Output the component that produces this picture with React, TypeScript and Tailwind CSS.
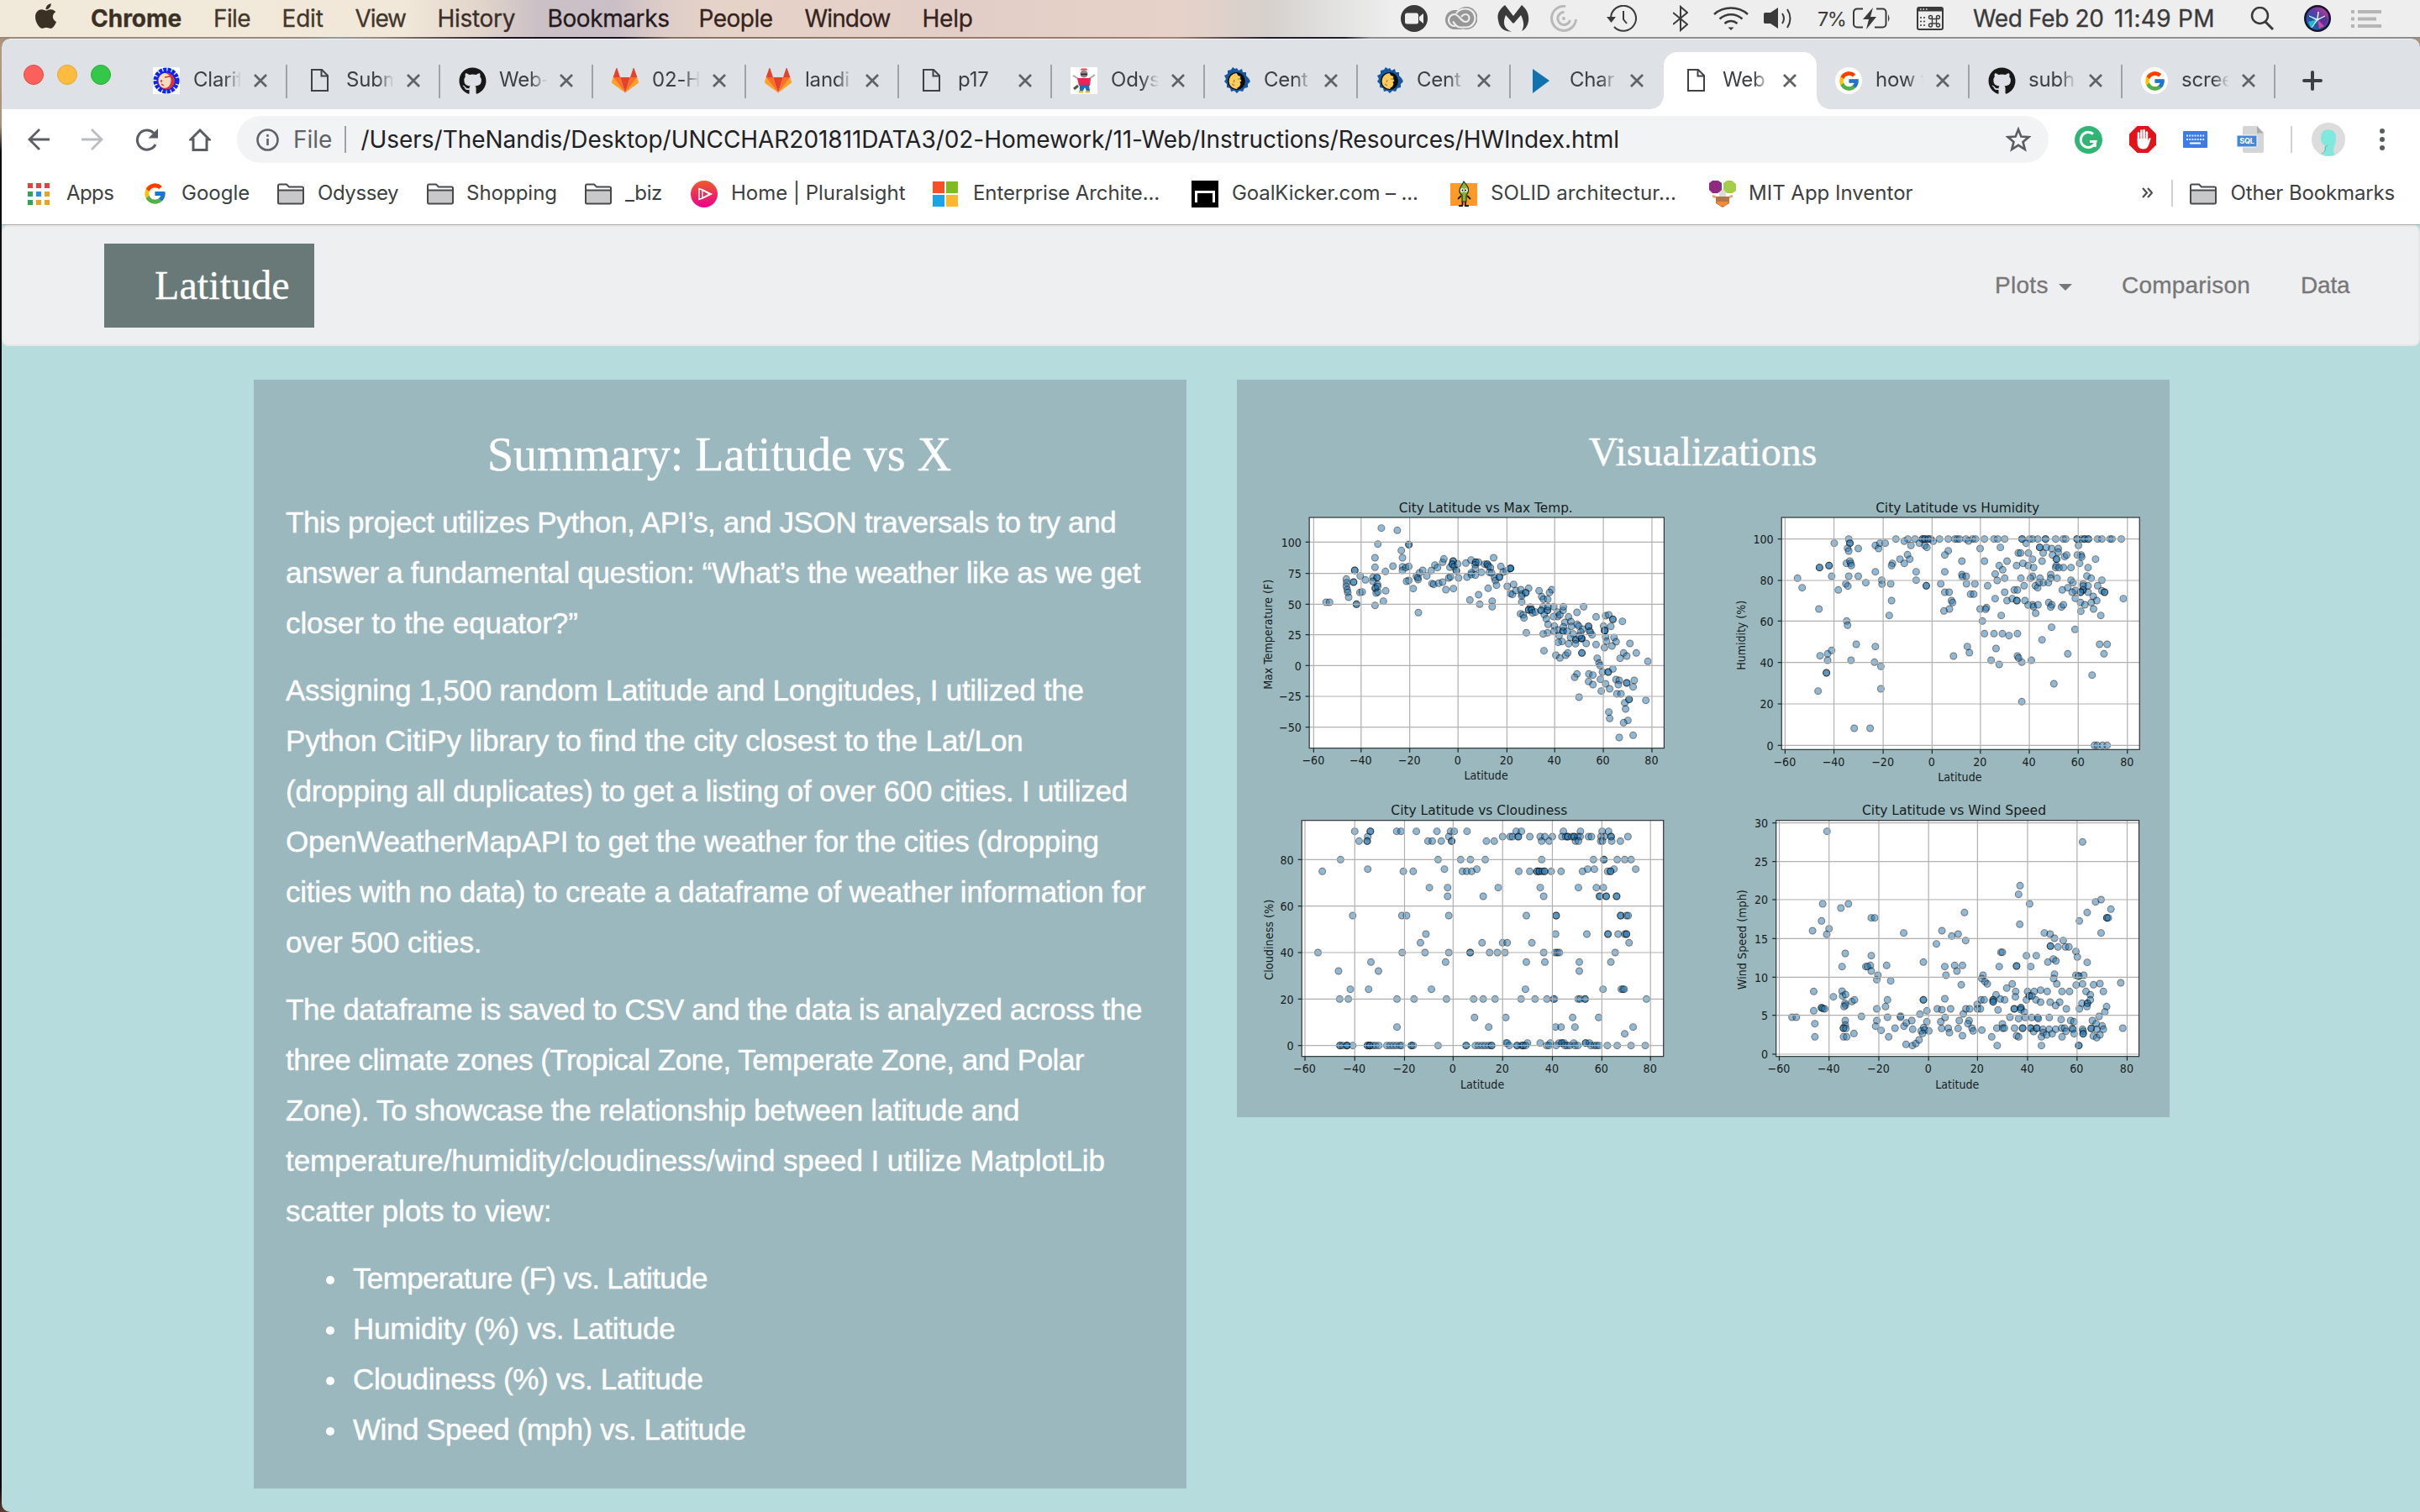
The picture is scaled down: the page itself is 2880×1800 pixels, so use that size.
import React from "react";
import { FaApple, FaGithub } from "react-icons/fa";
import { FcGoogle } from "react-icons/fc";

/* ---------- small icons ---------- */

const DocIcon = () => (
  <svg className="ml-[6px] h-[32px] w-[21px]" viewBox="0 0 21 32" fill="none" stroke="#3f4245" strokeWidth="2">
    <path d="M1 3h12l7 7v18H1z" />
    <path d="M12.500 3v7.500h7.500" />
  </svg>
);

const GitlabIcon = () => (
  <svg className="h-[32px] w-[32px]" viewBox="0 0 32 32">
    <path d="M16 30.500 22 12H10z" fill="#e24329" />
    <path d="M16 30.500 10 12H1.600z" fill="#fc6d26" />
    <path d="M1.600 12 0 17.500a1.300 1.300 0 0 0 .5 1.400L16 30.500z" fill="#fca326" />
    <path d="M1.600 12H10L6.500 1.500c-.2-.6-1-.6-1.200 0z" fill="#e24329" />
    <path d="M16 30.500 22 12h8.400z" fill="#fc6d26" />
    <path d="M30.400 12 32 17.500a1.300 1.300 0 0 1-.5 1.400L16 30.500z" fill="#fca326" />
    <path d="M30.400 12H22l3.500-10.500c.2-.6 1-.6 1.200 0z" fill="#e24329" />
  </svg>
);

const ClarityIcon = () => (
  <svg className="h-[32px] w-[32px]" viewBox="0 0 32 32">
    <rect width="32" height="32" fill="#fff" />
    <circle cx="16" cy="16" r="13" fill="none" stroke="#0b24fb" strokeWidth="5" strokeDasharray="4 1.200" />
    <circle cx="16" cy="16" r="11.500" fill="#0b24fb" />
    <circle cx="16" cy="16.500" r="10" fill="#d8343a" />
    <ellipse cx="14" cy="16" rx="7.500" ry="9" fill="#f7dcc0" />
    <path d="M14 12l6-1M10 20l3 2M10 15v3" stroke="#c23a2c" strokeWidth="1.500" />
  </svg>
);

const SunMoonIcon = () => (
  <svg className="h-[32px] w-[32px]" viewBox="0 0 32 32">
    <path
      d="M16 1l2 3 4-2 1 4 4 0 0 4 3 3 2 4-3 3 0 4-4 1-2 4-4-1-3 3-3-3-4 1-1-4-4-1 0-4-3-3 2-3-2-4 4-2 0-4 4-1 2-3 3 2z"
      fill="#1457a3"
    />
    <circle cx="15.500" cy="16.500" r="10.500" fill="#0c0c0c" />
    <path d="M15.500 7a9.500 9.500 0 1 0 1 19c-1-2 3-2 3-4l1-2-1-2 2-2-2-2 1-3-3-1z" fill="#fbcb5c" />
    <path d="M10 20l3 2M13 15l-1 3M17 14h4" stroke="#8f8b3e" strokeWidth="1.200" />
  </svg>
);

const MascotIcon = () => (
  <svg className="h-[32px] w-[32px]" viewBox="0 0 32 32">
    <rect width="32" height="32" fill="#fff" />
    <path d="M3 10l7 4h12l7-5" stroke="#a9a9a9" strokeWidth="2" fill="none" />
    <path d="M4 26l5-4" stroke="#555" strokeWidth="3" />
    <path d="M8 13h16l-1 9H10z" fill="#ee2255" />
    <circle cx="16" cy="8" r="4.500" fill="#8b8b8b" />
    <path d="M11.500 3.500h9L19 1.500h-6z" fill="#e8434d" />
    <path d="M12 8.500h8" stroke="#333" strokeWidth="2" />
    <path d="M11 21h11l1 7h-4l-2-4-2 4h-4z" fill="#1a6cc0" />
    <path d="M10 28h5v2.500h-5zM18 28h5v2.500h-5z" fill="#f2b01e" />
  </svg>
);

const PlayIcon = () => (
  <svg className="h-[32px] w-[32px]" viewBox="0 0 32 32">
    <path d="M4 2l20 14L4 31z" fill="#1173ae" />
  </svg>
);

const GoogleDisc = () => (
  <span className="flex h-[32px] w-[32px] items-center justify-center rounded-full bg-white">
    <FcGoogle className="h-[27px] w-[27px]" />
  </span>
);

const Folder = () => (
  <svg className="h-[26px] w-[32px]" viewBox="0 0 32 26" fill="none" stroke="#47494c" strokeWidth="2">
    <path d="M1 8.500V3a1.500 1.500 0 0 1 1.500-1.500H11l3 3h15.500A1.500 1.500 0 0 1 31 6v2.500" fill="#fff" />
    <path d="M1 8.500h30V23a1.500 1.500 0 0 1-1.500 1.500h-27A1.500 1.500 0 0 1 1 23z" fill="#c8c8c8" />
  </svg>
);

/* ---------- menu bar ---------- */

const menus = [
  { label: "Chrome", cls: "w-[146px] font-bold text-[#3a3024]" },
  { label: "File", cls: "w-[81.500px] tracking-[-0.600px] text-[#41372b]" },
  { label: "Edit", cls: "w-[87px] tracking-[-0.200px] text-[#41372b]" },
  { label: "View", cls: "w-[98px] tracking-[-1.100px] text-[#41372b]" },
  { label: "History", cls: "w-[131px] tracking-[-0.300px] text-[#3b2f29]" },
  { label: "Bookmarks", cls: "w-[180px] tracking-[-0.400px] text-[#241a20]" },
  { label: "People", cls: "w-[126px] tracking-[-0.500px] text-[#35231d]" },
  { label: "Window", cls: "w-[140px] tracking-[-0.850px] text-[#35231d]" },
  { label: "Help", cls: "tracking-[-0.200px] text-[#35231d]" },
];

const MenuBar = () => (
  <header className="flex h-[44px] shrink-0 items-center bg-[linear-gradient(90deg,#f1e9da_0px,#f1e8d9_480px,#e2d5cb_570px,#cbc0c5_640px,#cabfc6_730px,#decdc8_790px,#e6d3c8_860px,#e2cec6_1150px,#e6d2c8_1400px,#d6d1cd_1510px,#e2e2e1_1590px,#eeeeee_1660px,#eeeeee_100%)] text-[28px] leading-[44px]">
    <FaApple className="ml-[40px] mr-[39px] h-[34px] w-[29px] -translate-y-[3px] text-[#3a3024]" />
    {menus.map((m) => (
      <span key={m.label} className={`shrink-0 [-webkit-text-stroke:0.3px] ${m.cls}`}>
        {m.label}
      </span>
    ))}
    <div className="ml-auto flex h-[44px] shrink-0 items-center text-[#3a3a3a]">
      <svg className="mr-[21px] h-[32px] w-[32px]" viewBox="0 0 32 32">
        <circle cx="16" cy="16" r="16" fill="#3a3a3a" />
        <rect x="5" y="9.500" width="16" height="13" rx="2.500" fill="#eee" />
        <path d="M22 14l5-4v12l-5-4z" fill="#eee" />
      </svg>
      <svg className="mr-[24px] h-[28px] w-[38px]" viewBox="0 0 38 28">
        <rect x="0" y="4" width="28" height="23" rx="11.500" fill="#979797" />
        <circle cx="25" cy="13.500" r="13.500" fill="#979797" />
        <path
          d="M12 23h-1a6.500 6.500 0 0 1 0-14c5 0 8 9 13 9a4.500 4.500 0 0 0 0-9c-3 0-4 2-5 3M13 8c2-3 6-5.500 11-5.500a11 11 0 0 1 1 22h-8c-4 0-6-5-8-7"
          fill="none"
          stroke="#eee"
          strokeWidth="2.200"
        />
      </svg>
      <svg className="mr-[25px] h-[32px] w-[38px]" viewBox="0 0 38 32">
        <path
          d="M9 0l10 13L29 0c6 5 9 11 8 19-1 6-4 10-8 12 3-5 3-11-1-19l-7 8c-1 2-3 2-4 0l-7-8c-3 7-3 13 2 17 1 1 3 2 5 2.500C8 32 2 27 1 18-1 10 3 5 9 0z"
          fill="#3a3a3a"
        />
      </svg>
      <svg className="mr-[35px] h-[32px] w-[32px]" viewBox="0 0 32 32" fill="none" stroke="#b9b9b9" strokeWidth="3">
        <path d="M18 1.500A14.500 14.500 0 1 0 30.500 17" />
        <path d="M16.500 8.500A7.500 7.500 0 1 0 23.500 18" />
        <circle cx="16" cy="16" r="2" fill="#b9b9b9" stroke="none" />
      </svg>
      <svg className="mr-[43px] h-[32px] w-[36px]" viewBox="0 0 36 32" fill="none" stroke="#3a3a3a" strokeWidth="2">
        <path d="M5 15A15 15 0 1 1 9 26" />
        <path d="M0 14h11l-5.500 7z" fill="#3a3a3a" stroke="none" />
        <path d="M20 7v10l4 5" />
      </svg>
      <svg className="mr-[30px] h-[32px] w-[18px]" viewBox="0 0 18 32" fill="none" stroke="#3a3a3a" strokeWidth="2">
        <path d="M0 9l17 14-8 7V2l8 7L0 23" />
      </svg>
      <svg className="mr-[18px] h-[28px] w-[42px]" viewBox="0 0 42 28" fill="none" stroke="#3a3a3a" strokeWidth="2.500">
        <path d="M1 9c11-10 29-10 40 0" />
        <path d="M7.500 14.500c8-7 19-7 27 0" />
        <path d="M13.500 20c4.500-4 10.500-4 15 0" />
        <path d="M17.500 24.500h7L21 28z" fill="#3a3a3a" stroke="none" />
      </svg>
      <svg className="mr-[29px] h-[26px] w-[35px]" viewBox="0 0 35 26" fill="none" stroke="#3a3a3a" strokeWidth="2">
        <path d="M0 7.500Q0 6 2 6h6l9-6v25l-9-6H2q-2 0-2-1.500z" fill="#3a3a3a" stroke="none" />
        <path d="M22 7q4 6 0 12M28 2q7 11 0 22" />
      </svg>
      <span className="w-[42px] text-[23.500px] leading-[43px] tracking-[-1.500px]">7%</span>
      <svg className="mr-[31px] h-[26px] w-[45px]" viewBox="0 0 45 26" fill="none" stroke="#3a3a3a" strokeWidth="2">
        <path d="M12 1.500H5A4 4 0 0 0 1 5.500v14a4 4 0 0 0 4 4h7M28 1.500h7.500a4 4 0 0 1 4 4v14a4 4 0 0 1-4 4H26" />
        <path d="M24 0L12 14h7l-3 12 12-15h-7z" fill="#3a3a3a" stroke="none" />
        <path d="M42 8q3 5 0 9z" fill="#3a3a3a" stroke="none" />
      </svg>
      <svg className="mr-[35px] h-[28px] w-[32px]" viewBox="0 0 32 28" fill="none" stroke="#3a3a3a" strokeWidth="2">
        <rect x="1" y="1" width="30" height="26" rx="2" />
        <path d="M1 3.500h30" strokeWidth="4" />
        <path d="M4 3h1.500M7.500 3H9M11 3h1.500" stroke="#eee" strokeWidth="1.500" />
        <path d="M4 13h6M4 17.500h6M4 22h6" strokeDasharray="2 2" strokeWidth="1.600" />
        <g strokeWidth="1.400">
          <rect x="18.500" y="14.500" width="5" height="5.500" />
          <circle cx="16.500" cy="12.500" r="2" />
          <circle cx="25.500" cy="12.500" r="2" />
          <circle cx="16.500" cy="22" r="2" />
          <circle cx="25.500" cy="22" r="2" />
        </g>
      </svg>
      <span className="w-[168px] shrink-0 tracking-[-0.350px] [-webkit-text-stroke:0.3px]">Wed Feb 20</span>
      <span className="w-[162px] shrink-0 tracking-[0.300px] [-webkit-text-stroke:0.3px]">11:49 PM</span>
      <svg className="mr-[35px] h-[28px] w-[29px]" viewBox="0 0 29 28" fill="none" stroke="#3a3a3a" strokeWidth="2.500">
        <circle cx="11.500" cy="10.500" r="9.500" />
        <path d="M18 18l9 9" strokeWidth="3" />
      </svg>
      <svg className="mr-[24px] h-[32px] w-[32px]" viewBox="0 0 32 32">
        <defs>
          <linearGradient id="siri" x1="0" y1="0.900" x2="0.800" y2="0">
            <stop offset="0" stopColor="#1d6fb0" />
            <stop offset="0.350" stopColor="#2a4da6" />
            <stop offset="0.700" stopColor="#6a3aa8" />
            <stop offset="1" stopColor="#c23f8f" />
          </linearGradient>
        </defs>
        <circle cx="16" cy="16" r="16" fill="#15152a" />
        <circle cx="16" cy="16" r="13.500" fill="url(#siri)" />
        <path d="M16 17l-8 10-3-7z" fill="#27b7cf" />
        <path d="M16 17l10-3 2 4-5 7z" fill="#5a2f96" />
        <path d="M16 17l8 8-6 3z" fill="#d2489c" />
        <path d="M6 13l10 4 9-4-9 5-7 9 6-9z" fill="#eaffff" stroke="#bff4ff" strokeWidth="1" />
        <path d="M16 17l1-9" stroke="#eaffff" strokeWidth="1.500" />
      </svg>
      <svg className="mr-[46px] h-[21px] w-[36px]" viewBox="0 0 36 21" stroke="#b5b5b5" strokeWidth="4">
        <path d="M0 2h4M8 2h28M0 10.500h4M8 10.500h22M0 19h4M8 19h28" />
      </svg>
    </div>
  </header>
);

/* ---------- tabs ---------- */

const tabs = [
  { icon: <ClarityIcon />, label: "Clarif" },
  { icon: <DocIcon />, label: "Subm" },
  { icon: <FaGithub className="h-[33px] w-[33px] text-[#181818]" />, label: "Web-" },
  { icon: <GitlabIcon />, label: "02-H" },
  { icon: <GitlabIcon />, label: "landi" },
  { icon: <DocIcon />, label: "p17" },
  { icon: <MascotIcon />, label: "Odys" },
  { icon: <SunMoonIcon />, label: "Cent" },
  { icon: <SunMoonIcon />, label: "Cent" },
  { icon: <PlayIcon />, label: "Char", noSep: true },
  { icon: <DocIcon />, label: "Web", active: true },
  { icon: <GoogleDisc />, label: "how t" },
  { icon: <FaGithub className="h-[33px] w-[33px] text-[#181818]" />, label: "subh" },
  { icon: <GoogleDisc />, label: "scree" },
];

const TabStrip = () => (
  <div className="flex h-[84px] shrink-0 items-end rounded-t-[10px] border-t border-[#f3f4f6] bg-[#dee1e6]">
    <div className="mb-[29px] flex w-[158px] gap-[16px] pl-[26px]">
      <span className="h-[24px] w-[24px] rounded-full border border-[#e24b41] bg-[#fc605c]" />
      <span className="h-[24px] w-[24px] rounded-full border border-[#e1a73e] bg-[#fdbc40]" />
      <span className="h-[24px] w-[24px] rounded-full border border-[#2dac2f] bg-[#34c84a]" />
    </div>
    {tabs.map((t, i) => (
      <div
        key={i}
        className={`relative flex h-[68px] w-[182px] shrink-0 items-center pl-[22px] ${
          t.active ? "rounded-t-[16px] bg-white" : ""
        }`}
      >
        {t.active && (
          <>
            <span className="absolute -left-[16px] bottom-0 h-[16px] w-[16px] bg-[radial-gradient(circle_at_0_0,#dee1e6_15.500px,#ffffff_16px)]" />
            <span className="absolute -right-[16px] bottom-0 h-[16px] w-[16px] bg-[radial-gradient(circle_at_100%_0,#dee1e6_15.500px,#ffffff_16px)]" />
          </>
        )}
        <span className="flex w-[48px] shrink-0 items-center">{t.icon}</span>
        <span className="w-[57px] shrink-0 overflow-hidden whitespace-nowrap pb-[2px] text-[24px] leading-[32px] tracking-[-0.200px] text-[#3c4043] [mask-image:linear-gradient(90deg,#000_65%,transparent_100%)]">
          {t.label}
        </span>
        <svg className="ml-[15px] h-[16px] w-[16px] shrink-0" viewBox="0 0 16 16" stroke="#5f6368" strokeWidth="2.800">
          <path d="M1 1l14 14M15 1L1 15" />
        </svg>
        {!t.active && !t.noSep && <span className="absolute right-0 top-[15px] h-[40px] w-[2px] bg-[#a0a4a8]" />}
      </div>
    ))}
    <svg className="mb-[22px] ml-[32px] h-[24px] w-[24px]" viewBox="0 0 24 24" stroke="#3c4043" strokeWidth="4" strokeLinecap="round">
      <path d="M12 2v20M2 12h20" />
    </svg>
  </div>
);

/* ---------- toolbar ---------- */

const Toolbar = () => (
  <div className="flex h-[72px] shrink-0 items-center bg-white pl-[31px] text-[28px]">
    <svg className="mr-[38px] h-[26px] w-[26px]" viewBox="0 0 26 26" fill="none" stroke="#5a5e62" strokeWidth="2.800">
      <path d="M26 13H2M14 1L2 13l12 12" />
    </svg>
    <svg className="mr-[38px] h-[26px] w-[26px]" viewBox="0 0 26 26" fill="none" stroke="#babcbe" strokeWidth="2.800">
      <path d="M0 13h24M12 1l12 12-12 12" />
    </svg>
    <svg className="mr-[37px] h-[27px] w-[27px]" viewBox="0 0 27 27" fill="none" stroke="#5a5e62" strokeWidth="3">
      <path d="M24 19a11.500 11.500 0 1 1-2-13.500" />
      <path d="M27 0v11.500H15.500z" fill="#5a5e62" stroke="none" />
    </svg>
    <svg className="mr-[31px] h-[27px] w-[26px]" viewBox="0 0 26 27" fill="none" stroke="#5a5e62" strokeWidth="3">
      <path d="M5 25.500V13H2L13 2l11 11h-3v12.500z" />
    </svg>
    <div className="flex h-[56px] w-[2156px] shrink-0 items-center rounded-full bg-[#f1f3f4] pl-[23px]">
      <svg className="h-[27px] w-[27px] shrink-0" viewBox="0 0 27 27" fill="none" stroke="#5f6368" strokeWidth="2.600">
        <circle cx="13.500" cy="13.500" r="12" />
        <path d="M13.500 12v8M13.500 7v2.800" />
      </svg>
      <span className="ml-[17px] w-[61px] shrink-0 leading-[55px] text-[#5f6368]">File</span>
      <span className="h-[32px] w-[1.500px] shrink-0 bg-[#9fa2a5]" />
      <span className="ml-[18px] whitespace-nowrap leading-[55px] tracking-[-0.040px] text-[#1f2124]">
        /Users/TheNandis/Desktop/UNCCHAR201811DATA3/02-Homework/11-Web/Instructions/Resources/HWIndex.html
      </span>
      <svg className="ml-auto mr-[21px] h-[30px] w-[30px] shrink-0" viewBox="0 0 30 30" fill="none" stroke="#5a5e62" strokeWidth="2.600">
        <path d="M15 3l3.300 8.500 9.200.6-7 5.800 2.300 8.900L15 21.900l-7.800 4.900 2.300-8.900-7-5.800 9.200-.6z" />
      </svg>
    </div>
    <svg className="ml-[31px] mr-[32px] h-[33px] w-[33px]" viewBox="0 0 33 33" fill="none">
      <circle cx="16.500" cy="16.500" r="16.500" fill="#2fb574" />
      <path d="M22 9.500a9 9 0 1 0 3 9h-7" stroke="#fff" strokeWidth="3" />
      <path d="M24.500 17v8" stroke="#fff" strokeWidth="2.500" />
    </svg>
    <svg className="mr-[32px] h-[32px] w-[32px]" viewBox="0 0 32 32">
      <path d="M9.500 0h13L32 9.500v13L22.500 32h-13L0 22.500v-13z" fill="#e2131b" />
      <path
        d="M11 8.500v9M14.300 5.500V17M17.600 5v12M20.900 7.500V18"
        stroke="#fff"
        strokeWidth="2.600"
        strokeLinecap="round"
      />
      <path d="M9.700 15h12.500v2.500l1.500-3c.7-1 2.300-.5 1.800 1L23 23c-1.500 3-3 4.500-6.500 4.500-4.500 0-6.800-3-6.800-7z" fill="#fff" />
    </svg>
    <svg className="mr-[35px] h-[20px] w-[29px]" viewBox="0 0 29 20">
      <rect width="29" height="20" rx="1" fill="#3c7be8" />
      <path d="M4 5.500h22M4 10h22" stroke="#dfeaff" strokeWidth="2.200" strokeDasharray="2 1.200" />
      <path d="M8 14.500h13" stroke="#fff" strokeWidth="2.200" />
    </svg>
    <div className="relative mr-[32px] h-[32px] w-[32px]">
      <svg className="h-[32px] w-[32px]" viewBox="0 0 32 32">
        <path d="M7 2a2 2 0 0 1 2-2h15l8 8.500V30a2 2 0 0 1-2 2H9a2 2 0 0 1-2-2z" fill="#d4d5d6" />
        <path d="M24 0l8 8.500h-8z" fill="#a9abad" />
        <rect x="0" y="11" width="24" height="14" rx="1.500" fill="#4486d8" stroke="#fff" strokeWidth="1" />
      </svg>
      <span className="absolute left-[2px] top-[11px] w-[20px] text-center text-[9px] font-bold leading-[14px] tracking-[-0.200px] text-white">
        SQL
      </span>
    </div>
    <span className="mr-[23px] h-[32px] w-[2px] bg-[#cfd1d3]" />
    <svg className="mr-[41px] h-[40px] w-[40px]" viewBox="0 0 40 40">
      <circle cx="20" cy="20" r="20" fill="#dcdcdc" />
      <path
        d="M11 17c0-6 4-8.500 9-8.500s9 2.500 9 8.500c0 8-2 11-3 15 0 2 1 5 2 6.500-5 1.700-11 1.700-16-.5 3-1 4-3 3.500-6 0-1.500 2-3 2.500-5-5 1-7-4-7-10z"
        fill="#80e8dc"
      />
      <path d="M12 37c4-2 5-5 4-8l3-2" stroke="#4fb3aa" strokeWidth="1" fill="none" />
    </svg>
    <svg className="h-[26px] w-[6px]" viewBox="0 0 6 26" fill="#5a5e62">
      <circle cx="3" cy="3" r="3" />
      <circle cx="3" cy="13" r="3" />
      <circle cx="3" cy="23" r="3" />
    </svg>
  </div>
);

/* ---------- bookmarks ---------- */

const AppsIcon = () => (
  <svg className="h-[26px] w-[26px]" viewBox="0 0 26 26">
    <path d="M0 0h6v6H0zM10 0h6v6h-6zM20 0h6v6h-6z" fill="#ee3e3c" />
    <path d="M0 10h6v6H0zM0 20h6v6H0z" fill="#35a15e" />
    <path d="M10 10h6v6h-6z" fill="#2a8cf0" />
    <path d="M20 10h6v6h-6zM10 20h6v6h-6zM20 20h6v6h-6z" fill="#eba327" />
  </svg>
);

const PluralsightIcon = () => (
  <svg className="h-[32px] w-[32px]" viewBox="0 0 32 32" fill="none">
    <defs>
      <linearGradient id="ps" x1="0" y1="0" x2="0" y2="1">
        <stop offset="0" stopColor="#f05a28" />
        <stop offset="1" stopColor="#ec008c" />
      </linearGradient>
    </defs>
    <circle cx="16" cy="16" r="16" fill="url(#ps)" />
    <path d="M10 9.500v13l5-2 9.500-4.500-9.500-4.500z" stroke="#fff" strokeWidth="1.500" />
    <path d="M14 11v10l8.500-5z" stroke="#fff" strokeWidth="1.500" />
  </svg>
);

const WindowsIcon = () => (
  <svg className="h-[30px] w-[30px]" viewBox="0 0 30 30">
    <path d="M0 0h14v14H0z" fill="#f4502a" />
    <path d="M16 0h14v14H16z" fill="#80bb22" />
    <path d="M0 16h14v14H0z" fill="#1ba4ea" />
    <path d="M16 16h14v14H16z" fill="#fdb92c" />
  </svg>
);

const GoalIcon = () => (
  <svg className="h-[32px] w-[32px]" viewBox="0 0 32 32">
    <rect width="32" height="32" fill="#000" />
    <path d="M5.500 26V13.500h21V26" stroke="#fff" strokeWidth="3" fill="none" />
  </svg>
);

const SolidIcon = () => (
  <svg className="h-[32px] w-[32px]" viewBox="0 0 32 32">
    <rect y="3" width="32" height="27" fill="#ff9a26" />
    <path d="M16 1c4 5 6 7 5.500 11 0 3-1.500 4-2.500 5v8h-5v-8c-2-1-3.500-3-3-5.500 0-4 3-5.500 5-10.500z" fill="#84b63c" stroke="#2a3513" strokeWidth="1.200" />
    <circle cx="14" cy="11.500" r="2.200" fill="#fff" />
    <circle cx="18.500" cy="11.500" r="2.200" fill="#fff" />
    <circle cx="14.500" cy="11.500" r="1" />
    <circle cx="18" cy="11.500" r="1" />
    <path d="M13 18l-4 4M20 18l4 4M14.500 25v4M18 25v4M10 30h5M17 30h5" stroke="#1c1c1c" strokeWidth="1.800" />
  </svg>
);

const InventorIcon = () => (
  <svg className="h-[32px] w-[32px]" viewBox="0 0 32 32">
    <path d="M0 3l4-3h7l4 3v9l-5 3H4l-4-4z" fill="#8e2a80" />
    <path d="M17 3l4-3h6l5 4v8l-4 3h-7l-4-4z" fill="#a5cd4c" />
    <path d="M12 14l4-4 4 4v5h-8z" fill="#d9dade" />
    <path d="M8 19h16v8l-8 5-8-5z" fill="#b0764a" />
    <path d="M8 25h16l-5 5h-6z" fill="#f58a33" />
    <path d="M4 18l4 2M28 18l-4 2" stroke="#f3a36b" strokeWidth="3" />
  </svg>
);

const bookmarks = [
  { icon: <AppsIcon />, label: "Apps", slot: "w-[46px]", cls: "w-[139px] tracking-[-0.600px]" },
  { icon: <FcGoogle className="-ml-[2px] h-[29px] w-[29px]" />, label: "Google", slot: "w-[44px]", cls: "w-[158px]" },
  { icon: <Folder />, label: "Odyssey", slot: "w-[48px]", cls: "w-[178px] tracking-[-0.400px]" },
  { icon: <Folder />, label: "Shopping", slot: "w-[47px]", cls: "w-[188px]" },
  { icon: <Folder />, label: "_biz", slot: "w-[48px]", cls: "w-[126px] tracking-[-0.400px]" },
  { icon: <PluralsightIcon />, label: "Home | Pluralsight", slot: "w-[48px]", cls: "w-[288px]" },
  { icon: <WindowsIcon />, label: "Enterprise Archite...", slot: "w-[48px]", cls: "w-[308px] tracking-[-0.100px]" },
  { icon: <GoalIcon />, label: "GoalKicker.com – ...", slot: "w-[48px]", cls: "w-[308px] tracking-[-0.120px]" },
  { icon: <SolidIcon />, label: "SOLID architectur...", slot: "w-[48px]", cls: "w-[308px] tracking-[0.080px]" },
  { icon: <InventorIcon />, label: "MIT App Inventor", slot: "w-[47px]", cls: "w-[515px]" },
];

const BookmarksBar = () => (
  <div className="flex h-[66px] shrink-0 items-center border-b border-[#acacac] bg-white pb-[10px] pl-[31px] text-[24px] leading-[54px] text-[#3c4043]">
    {bookmarks.map((b) => (
      <div key={b.label} className={`flex shrink-0 items-center whitespace-nowrap ${b.cls}`}>
        <span className={`mt-[2px] flex shrink-0 ${b.slot}`}>{b.icon}</span>
        {b.label}
      </div>
    ))}
    <svg className="mr-[22px] h-[13px] w-[13px]" viewBox="0 0 13 13" fill="none" stroke="#4c5054" strokeWidth="2.200">
      <path d="M1 1l5 5.500L1 12M7 1l5 5.500L7 12" />
    </svg>
    <span className="mr-[20px] h-[32px] w-[1.500px] bg-[#cfd1d3]" />
    <span className="mt-[2px] flex w-[49px] shrink-0">
      <Folder />
    </span>
    <span className="shrink-0 tracking-[-0.130px]">Other Bookmarks</span>
  </div>
);

/* ---------- charts ---------- */

type Point = [number, number];

const SX = 0.34439;
const SY = 1 / 3;

// "x y" pairs separated by commas; a trailing ":n" repeats an overlapping marker n times.
const parse = (src: string): Point[] =>
  src.split(",").flatMap((p) => {
    const [xy, n] = p.trim().split(":");
    const [x, y] = xy.split(" ").map(Number);
    return Array.from({ length: n ? Number(n) : 1 }, () => [x, y] as Point);
  });

const rows = (src: [number, number[]][]): Point[] => src.flatMap(([y, xs]) => xs.map((x) => [x, y] as Point));

const tempPoints = parse(
  "285 411,297 411,355 328,356 341,355 354,358 366,360 376,363 393,380 339:2,384 297:2,390 418:2,403 317,402 376,410 374,421 331,454 286,454 252,464 203,476 146,531 154,545 226,549 252,571 205:2,516 282,490 301,491 370,483 407,454 422,447 322,461 323:2,447 336,463 347,455 361:2,458 378,464 374,463 355,549 284,549 297,561 287,571 283,571 333,563 336,586 362,604 448,597 318,603 330,602 323,608 306,619 297,633 317,648 298,661 278,670 287,688 268,692 256,651 344,657 347,674 343,688 339,699 366,725 362,709 324,715 320,713 286,724 264:2,721 275:2,728 283,740 274,735 298:2,743 324,768 271,772 321,786 260,802 268:2,800 277,812 268,801 290,787 305,787 312,801 314,822 304,782 403,812 384,816 418,845 361,859 407,859 427,864 252,833 275,842 275:2,846 282,853 287,849 304,857 306,867 323,870 333,884 321:2,874 350,889 283,897 303,908 299,922 290:3,911 354,933 347,922 380,929 383,941 369,958 366,985 361,962 382,975 377:2,961 389,961 410,977 520,957 452,966 456,969 467,991 428,985 438:2,995 438:2,999 449,1008 446,1021 370,1030 391,1036 400,1051 400,1065 366,1057 376,1035 427,1028 440:2,1050 440:2,1052 427,1072 427,1039 455,1046 470,1052 490,1071 462,1085 462,1085 446,1093 456,1104 440,1105 427,1074 496,1073 514,1050 520,1035 524,1038 584,1085 510,1104 514:2,1110 483,1105 499,1123 463,1131 480,1133 497,1118 515,1152 447,1175 427,1218 463,1153 490,1158 496,1172 507,1165 517,1192 497:2,1196 514,1204 527,1198 518,1130 537,1139 524,1148 545:2,1168 540:3,1160 531,1147 559,1123 559,1100 551,1087 554,1090 530,1184 558,1218 562,1169 592:2,1079 600,1093 610,1113 600,1120 592,1251 459,1262 456,1276 472:2,1309 479,1244 496,1269 497,1248 512:3,1251 535,1280 537,1254 550,1287 552,1273 567,1247 573,1335 558,1313 592,1324 603,1301 611,1357 592,1397 622,1222 611,1228 628,1232 637,1240 660,1260 660:2,1276 649,1152 667,1144 679,1193 667,1207 671,1233 686,1192 694,1207 705,1251 702,1287 687,1298 690,1295 705,1324 699:2,1350 690,1346 713,1236 728,1265 720,1290 738,1304 738,1159 750,1317 770,1332 758:2,1320 792,1390 761,1262 803,1265 826,1328 833,1313 841,1298 894,1346 886"
);

const humidityPoints = parse(
  "288 325,304 359,362 435,364 287:2,397 280:2,366 602,392 595,406 583,392 618,388 663:2,359 728,406 318,415 200,429 367,455 345,462 353,457 272,469 264,472 272,474 280,465 185,469 200:2,461 218,465 228,498 219,465 318,498 318,458 478,461 493,491 561,473 618,484 861,539 861,524 341,557 302,557 208,568 219,573 200,591 200,579 332,580 346,610 345,613 405,605 458,557 569,554 625,576 640,576 720,628 185,669 185,694 185,657 193,668 241,642 257,676 257,616 272,613 280,657 272,680 208,698 302,698 332,733 352:2,709 200,720 185:2,728 185:2,740 185:2,748 185,728 208,735 215,757 193,779 185,809 185,832 185,840 185,848 185,870 185,893 185,903 185,879 192,934 185,967 185,980 185,1004 185,1064 185:2,1090 185,1100 185,1118 185,1145 185:2,1180 185,1206 185,1215 185,1254 185:2,1270 185,1280 185:2,1293 185:2,1325 185,1340 185,1368 185,1375 185,1407 185,809 227,797 242,856 264,797 302,783 345,797 375,812 375,820 405,824 412,813 435,794 442,827 603,856 312,858 320,871 318,872 345,901 345,886 382,897 382,875 569,882 591,919 219,989 215,934 264,945 352,941 430,919 435,938 436,927 478,934 523,967 523,996 523,1019 530,1048 523,957 618,974 576,985 633,992 458,971 398,978 333,971 310,985 280,997 295,1012 264,1004 325,1004 375,1012 405,1030 398,1037 367,1048 367,1046 405:2,1074 405,1060 325,1071 352,1045 280,1067 272,1085 280,1051 235,1059 235,1086 235,1078 200,1100 257,1104 287,1100 318,1093 325,1110 352,1118 359,1126 325,1123 341,1138 341,1155 341,1163 312,1163 325,1185 325,1085 421,1100 420,1103 427,1119 420,1111 450,1125 215:2,1148 215,1137 235,1133 264,1166 219,1189 219,1189 232,1169 242,1183 257:2,1211 248,1218 242,1182 280,1180 287,1192 287,1207 287,1233 287,1203 367,1222 359,1233 332,1240 341,1248 369,1237 375,1156 412,1167 420,1163 428,1200 428,1207 420,1248 397,1166 500,1133 545,1096 618,1063 625,1048 603,1052 610,1063 766,1174 702,1247 508,1222 595,1259 208,1255 242,1268 242,1270 249,1263 272,1318 257,1292 287,1288 317,1303 325,1340 332,1275 345,1292 352,1325 352,1275 367:2,1266 375:2,1292 375,1340 370,1349 375:2,1310 390,1322 405,1303 412,1266 412,1281 420,1267 443,1311 435,1336 458,1414 398,1332 561,1358 561,1347 595,1306 671,1314 922,1324 922,1342 922,1358 922,1275 353"
);

const cloudPoints = rows([
  [149, [384, 438, 438, 529, 544, 597, 668, 715, 728, 772, 942, 960, 1105, 1164, 1239, 1261]],
  [168, [429, 709, 895, 921, 929, 948, 950, 989, 1025, 1041, 1067, 1100, 1113, 1120, 1120, 1134, 1142, 1142, 1155, 1163, 1192, 1202, 1235, 1246, 1270, 1270, 1328]],
  [184, [399, 427, 427, 637, 652, 683, 719, 719, 839, 866, 1030, 1056, 1147, 1157, 1234, 1240, 1272, 1302]],
  [250, [335, 672, 750, 784, 835, 1030, 1209, 1245, 1245, 1291, 1317, 1339]],
  [284, [429, 694, 806, 1189, 1212, 1280, 1355]],
  [292, [272, 552, 586, 756, 771, 788, 951, 989, 1014, 1014, 1022, 1022, 1032, 1040, 1040, 1063, 1097, 1171, 1258, 1268, 1268]],
  [350, [642, 705, 880, 1025, 1157, 1219, 1243]],
  [381, [705, 828, 1037, 1229, 1232, 1253, 1253, 1289, 1289]],
  [450, [377, 547, 563, 709, 977, 1080, 1080, 1303, 1303, 1323, 1329]],
  [516, [630, 1078, 1186, 1259, 1259, 1294, 1317, 1323, 1323]],
  [547, [611, 824, 895, 911, 996, 1332]],
  [582, [257, 548, 627, 709, 783, 783, 850, 877, 903, 1037, 1077, 1084, 1091, 1284]],
  [616, [440, 698, 977, 1041, 1160, 1269]],
  [648, [328, 466, 1160]],
  [713, [369, 432, 649, 974, 1242, 1305, 1311, 1315]],
  [748, [332, 362, 530, 589, 701, 795, 828, 869, 959, 1007, 1048, 1071, 1074, 1156, 1163, 1180, 1180, 1392]],
  [814, [798, 906, 1137, 1227]],
  [848, [530, 847, 1078, 1097, 1145, 1346]],
  [872, [1317]],
  [905, [907, 911, 981, 1025, 1060, 1090, 1100, 1100, 1108, 1141, 1182, 1182, 1195]],
  [914, [333, 333, 343, 357, 357, 357, 377, 428, 428, 436, 436, 436, 447, 456, 467, 495, 506, 517, 528, 540, 546, 580, 580, 586, 672, 769, 769, 801, 812, 824, 835, 847, 857, 857, 918, 945, 945, 960, 966, 966, 975, 1047, 1055, 1080, 1110, 1118, 1127, 1145, 1155, 1200, 1212, 1220, 1228, 1257, 1291, 1339, 1388]],
]);

const windPoints = parse(
  "390 149,1273 187,375 408,438 423,464 408,371 469,397 497,389 517,340 504,543 458,555 458,655 512,787 504,821 523,843 516,869 539,768 551,865 439,1057 343,1052 374,1056 481,1090 408,1337 393,1318 401,1371 427,1289 439,1357 458:2,1362 458,1262 469,1337 512,1141 512,1161 516,1176 531,1206 539,1162 559:2,1188 562,1214 562,1226 562,1250 578,1255 598,1289 617,453 585,442 632,543 593,540 628,524 632,530 632,543 648,596 628,566 663,562 679,610 683,723 616,797 632,831 628,858 628,839 648,801 663,854 697,797 747,985 632,991 581,996 581,1045 630:2,1079 593,1113 593,1094 632,1153 616,1172 605,1181 612,1176 659,1173 675,1184 694,1250 663,1260 666:2,1277 663,1251 698,1273 694,1311 697,1333 693,1405 690,1345 721,344 721,412 740,442 720,444 737,454 732,452 763,454 770,449 775,476 757,485 751,599 751,592 775,562 783,509 810,599 813,344 790,371 779:2,376 782,382 783,269 813,284 813,348 836,348 883,453 825,453 841,447 852:2,455 853,447 883,458 883,483 871,562 825,558 845,577 860,603 883,625 852,644 809,644 813,656 845,664 833,683 825,686 856,711 802,735 790,735 829,723 751:2,724 850,715 862,728 858,742 862,720 871,663 910,685 914,697 907,708 894,771 783,787 786,817 783,783 829,798 814,786 853,809 852,813 868,843 853,847 825,861 801,870 783,883 783,881 825,877 836,891 852,895 862,858 879,925 859,909 767,910 783,920 783,922 751,933 751,929 663,925 675,936 686,944 694,974 733,964 751:2,964 758:2,989 748,1004 751,981 787,1022 813,1030 694,1011 709,1042 721,1041 740,1083 721,1106 721,1128 716,1151 721,1202 721,1228 721,1285 721,1300 733,1089 737:2,1098 737,1079 751,1112 751,1128 759,1161 759,1194 759,1180 771,1217 783,1271 763,1290 763:2,1300 751,1262 783,1288 775,1356 775,1350 794,1330 810,1037 783:2,1060 779:2,1060 786,1072 795,1052 818,1075 814,1097 814,1118 814,1120 818,1158 814,1199 821,1232 825,1243 829,1307 825,1320 836,1341 844,959 883,978 914,977 852,996 837,997 852,1003 852,1038 852,1066 852:2,1094 852:2,1104 864,1115 852:2,1136 856,1137 868,1158 856,1180 856,1201 852,1211 852,1216 863,1237 853,1240 856,1244 872,1273 856,1275 863,1275 872:2,1303 853:2,1322 856,1345 856,1412 852,1045 879,1052 883,1131 883,1149 876,1168 872,1202 883,1310 880,1322 886,1333 876,1131 914,1260 914:2"
);

interface ChartSpec {
  title: string;
  titleX: number;
  titleW: number;
  yLabel: string;
  yLabelX: number;
  yLabelY: number;
  yLabelW: number;
  xLabelX: number;
  xLabelY: number;
  tickY: number;
  tickRight: number;
  box: [number, number, number, number];
  xTicks: number[];
  yTicks: [string, number][];
  points: Point[];
}

const xNames = ["−60", "−40", "−20", "0", "20", "40", "60", "80"];

const charts: ChartSpec[] = [
  {
    title: "City Latitude vs Max Temp.", titleX: 837, titleW: 207,
    yLabel: "Max Temperature (F)", yLabelX: 98, yLabelY: 526, yLabelW: 131,
    xLabelX: 838, xLabelY: 1043, tickY: 990, tickRight: 200,
    box: [227, 108, 1453, 932],
    xTicks: [242, 406, 574, 741, 910, 1075, 1243, 1411],
    yTicks: [["100", 196], ["75", 308], ["50", 418], ["25", 527], ["0", 637], ["−25", 747], ["−50", 857]],
    points: tempPoints,
  },
  {
    title: "City Latitude vs Humidity", titleX: 841, titleW: 195,
    yLabel: "Humidity (%)", yLabelX: 108, yLabelY: 529, yLabelW: 83,
    xLabelX: 849, xLabelY: 1049, tickY: 995, tickRight: 205,
    box: [233, 108, 1470, 937],
    xTicks: [245, 414, 584, 753, 920, 1089, 1258, 1428],
    yTicks: [["100", 185], ["80", 333], ["60", 478], ["40", 626], ["20", 774], ["0", 922]],
    points: humidityPoints,
  },
  {
    title: "City Latitude vs Cloudiness", titleX: 814, titleW: 210,
    yLabel: "Cloudiness (%)", yLabelX: 103, yLabelY: 536, yLabelW: 96,
    xLabelX: 825, xLabelY: 1067, tickY: 1012, tickRight: 173,
    box: [201, 110, 1451, 953],
    xTicks: [212, 384, 556, 724, 895, 1067, 1238, 1406],
    yTicks: [["80", 250], ["60", 416], ["40", 582], ["20", 748], ["0", 914]],
    points: cloudPoints,
  },
  {
    title: "City Latitude vs Wind Speed", titleX: 829, titleW: 219,
    yLabel: "Wind Speed (mph)", yLabelX: 110, yLabelY: 536, yLabelW: 119,
    xLabelX: 840, xLabelY: 1067, tickY: 1012, tickRight: 186,
    box: [214, 110, 1468, 953],
    xTicks: [225, 397, 569, 741, 910, 1083, 1254, 1427],
    yTicks: [["30", 119], ["25", 257], ["20", 393], ["15", 532], ["10", 670], ["5", 806], ["0", 945]],
    points: windPoints,
  },
];

const Chart = ({ c }: { c: ChartSpec }) => {
  const [x0, y0, x1, y1] = [c.box[0] * SX, c.box[1] * SY, c.box[2] * SX, c.box[3] * SY];
  return (
    <svg
      className="h-[360px] w-[540px] overflow-visible font-['DejaVu_Sans',sans-serif]"
      viewBox="0 0 540 360"
      fill="#151d20"
      fontSize="13.800"
      textAnchor="middle"
    >
      <rect x={x0} y={y0} width={x1 - x0} height={y1 - y0} fill="#fff" />
      {c.points.map(([x, y], i) => (
        <circle
          key={i}
          cx={x * SX}
          cy={y * SY}
          r="3.900"
          fill="#1f77b4"
          stroke="#000"
          strokeWidth="1.200"
          opacity="0.500"
        />
      ))}
      {c.xTicks.map((x, i) => (
        <g key={i}>
          <path d={`M${x * SX} ${y0}V${y1}`} stroke="#b0b0b0" strokeWidth="1.200" />
          <path d={`M${x * SX} ${y1}v5`} stroke="#1b2528" strokeWidth="1.200" />
          <text transform={`translate(${(x - 1.500) * SX} ${c.tickY * SY}) scale(0.920 1)`}>{xNames[i]}</text>
        </g>
      ))}
      {c.yTicks.map(([name, y]) => (
        <g key={name}>
          <path d={`M${x0} ${y * SY}H${x1}`} stroke="#b0b0b0" strokeWidth="1.200" />
          <path d={`M${x0} ${y * SY}h-4.500`} stroke="#1b2528" strokeWidth="1.200" />
          <text transform={`translate(${c.tickRight * SX} ${y * SY + 5.400}) scale(0.920 1)`} textAnchor="end">
            {name}
          </text>
        </g>
      ))}
      <rect x={x0} y={y0} width={x1 - x0} height={y1 - y0} fill="none" stroke="#2b3538" strokeWidth="1.200" />
      <text x={c.titleX * SX} y={29.500} fontSize="16.200" textLength={c.titleW} lengthAdjust="spacingAndGlyphs">
        {c.title}
      </text>
      <text transform={`translate(${c.xLabelX * SX} ${c.xLabelY * SY}) scale(0.920 1)`}>Latitude</text>
      <text
        transform={`translate(${c.yLabelX * SX} ${c.yLabelY * SY}) rotate(-90)`}
        fontSize="13.200"
        textLength={c.yLabelW}
        lengthAdjust="spacingAndGlyphs"
      >
        {c.yLabel}
      </text>
    </svg>
  );
};

/* ---------- page ---------- */

const SiteNav = () => (
  <nav className="flex h-[144px] shrink-0 items-center rounded-[8px] border-2 border-[#e7e7e7] bg-[#eeeff1] font-['Liberation_Sans',sans-serif] text-[28px] text-[#777777] [-webkit-text-stroke:0.3px]">
    <a className="ml-[120px] h-[100px] w-[250px] bg-[#687978] pl-[60px] font-['Liberation_Serif',serif] text-[48px] leading-[100px] tracking-[0.100px] text-white">
      Latitude
    </a>
    <a className="ml-auto flex w-[151px] items-center tracking-[0.300px]">
      Plots
      <span className="ml-[12px] mt-[4px] h-0 w-0 border-x-[8px] border-t-[8px] border-x-transparent border-t-[#777777]" />
    </a>
    <a className="w-[213px] tracking-[0.200px]">Comparison</a>
    <a className="w-[140px] tracking-[-0.190px]">Data</a>
  </nav>
);

const paragraphs = [
  [
    { text: "This project utilizes Python, API’s, and JSON traversals to try and", cls: "tracking-[-0.365px]" },
    { text: "answer a fundamental question: “What’s the weather like as we get", cls: "tracking-[-0.325px]" },
    { text: "closer to the equator?”", cls: "tracking-[-0.110px]" },
  ],
  [
    { text: "Assigning 1,500 random Latitude and Longitudes, I utilized the", cls: "tracking-[-0.280px]" },
    { text: "Python CitiPy library to find the city closest to the Lat/Lon", cls: "tracking-[-0.090px]" },
    { text: "(dropping all duplicates) to get a listing of over 600 cities. I utilized", cls: "tracking-[-0.240px]" },
    { text: "OpenWeatherMapAPI to get the weather for the cities (dropping", cls: "tracking-[-0.328px]" },
    { text: "cities with no data) to create a dataframe of weather information for", cls: "tracking-[-0.228px]" },
    { text: "over 500 cities.", cls: "tracking-[-0.123px]" },
  ],
  [
    { text: "The dataframe is saved to CSV and the data is analyzed across the", cls: "tracking-[-0.427px]" },
    { text: "three climate zones (Tropical Zone, Temperate Zone, and Polar", cls: "tracking-[-0.500px]" },
    { text: "Zone). To showcase the relationship between latitude and", cls: "tracking-[-0.346px]" },
    { text: "temperature/humidity/cloudiness/wind speed I utilize MatplotLib", cls: "tracking-[-0.090px]" },
    { text: "scatter plots to view:", cls: "tracking-[-0.026px]" },
  ],
];

const bullets = [
  { text: "Temperature (F) vs. Latitude", cls: "tracking-[-0.636px]" },
  { text: "Humidity (%) vs. Latitude", cls: "tracking-[-0.220px]" },
  { text: "Cloudiness (%) vs. Latitude", cls: "tracking-[-0.350px]" },
  { text: "Wind Speed (mph) vs. Latitude", cls: "tracking-[-0.449px]" },
];

const Page = () => (
  <main className="flex grow flex-col overflow-hidden bg-[#b6dcdd]">
    <SiteNav />
    <div className="mt-[40px] flex items-start gap-[60px] pl-[300px] text-white [-webkit-text-stroke:0.4px]">
      <section className="h-[1320px] w-[1110px] shrink-0 bg-[#9bb8be] pl-[38px] pt-[54px] font-['Liberation_Sans',sans-serif] text-[35px] leading-[60px]">
        <h2 className="mb-[16px] -ml-[40px] text-center font-['Liberation_Serif',serif] text-[56px] leading-[70px]">
          Summary: Latitude vs X
        </h2>
        {paragraphs.map((p, i) => (
          <p key={i} className="mb-[20px]">
            {p.map((l) => (
              <span key={l.text} className={`block whitespace-nowrap ${l.cls}`}>
                {l.text}
              </span>
            ))}
          </p>
        ))}
        <ul className="pl-[48px]">
          {bullets.map((b) => (
            <li key={b.text} className={`flex items-center ${b.cls}`}>
              <span className="mr-[22px] mt-[4px] h-[10px] w-[10px] rounded-full bg-white" />
              {b.text}
            </li>
          ))}
        </ul>
      </section>
      <section className="h-[878px] w-[1110px] shrink-0 bg-[#9bb8be] pl-[8px] pt-[58px]">
        <h3 className="-ml-[9px] mb-[14px] text-center font-['Liberation_Serif',serif] text-[48px] leading-[56px]">
          Visualizations
        </h3>
        <div className="grid grid-cols-[540px_540px] gap-x-[20px] [-webkit-text-stroke:0]">
          {charts.map((c) => (
            <Chart key={c.title} c={c} />
          ))}
        </div>
      </section>
    </div>
  </main>
);

export default function App() {
  return (
    <div className="flex h-[1800px] w-[2880px] flex-col overflow-hidden bg-[linear-gradient(180deg,#8d7462_0px,#b29a83_60px,#b08f78_150px,#0d0b10_180px,#0b0a0d_1770px,#5e3d30_1800px)] font-['Inter',sans-serif]">
      <MenuBar />
      <div className="h-[2px] shrink-0 bg-[linear-gradient(90deg,#9b8878_0px,#9b8878_360px,#8fa0a0_400px,#9b8878_450px,#17131f_600px,#17131f_740px,#8a7060_800px,#a08070_1400px,#1f1b28_1510px,#1f1b28_1600px,#8c8c8c_1630px,#8c8c8c_100%)]" />
      <div className="ml-[2px] flex grow flex-col overflow-hidden rounded-l-[10px] rounded-tr-[10px]">
        <TabStrip />
        <Toolbar />
        <BookmarksBar />
        <Page />
      </div>
    </div>
  );
}
